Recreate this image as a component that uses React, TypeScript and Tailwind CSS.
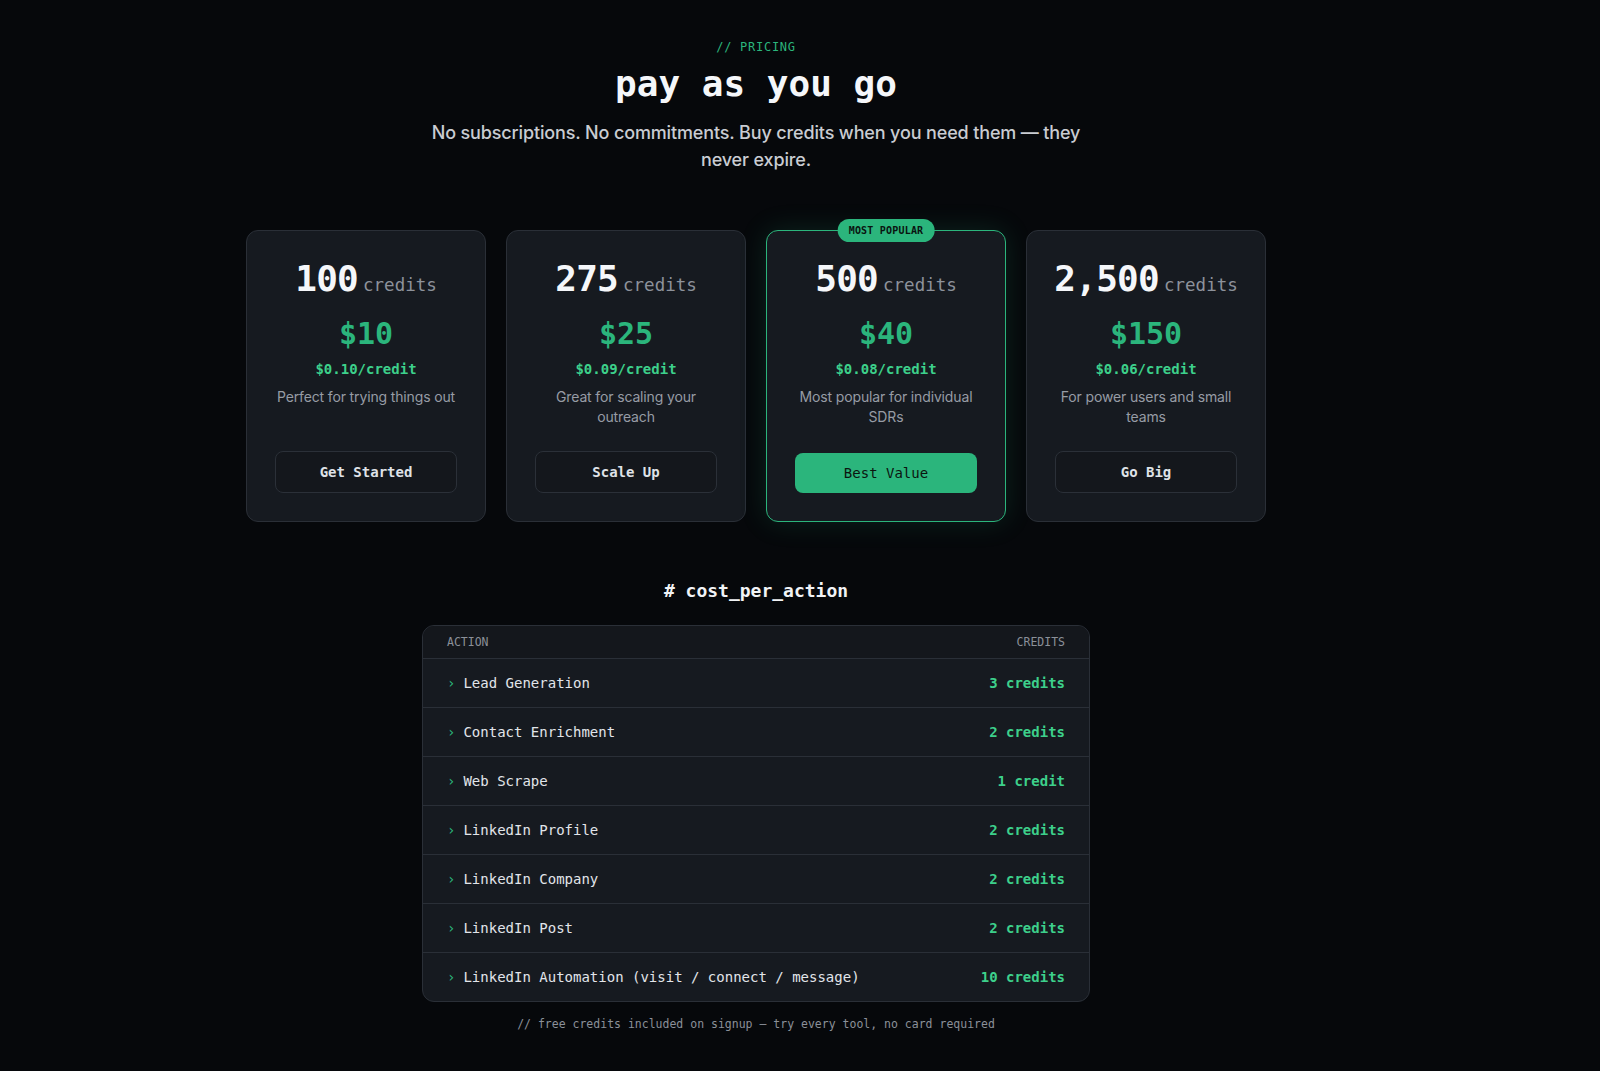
import React from "react";

const mono = { fontFamily: '"DejaVu Sans Mono", "Liberation Mono", monospace' };
const sans = { fontFamily: 'Inter, "Noto Sans", sans-serif' };

type Plan = {
  credits: string;
  price: string;
  per: string;
  desc: string;
  cta: string;
  featured?: boolean;
};

const plans: Plan[] = [
  { credits: "100", price: "$10", per: "$0.10/credit", desc: "Perfect for trying things out", cta: "Get Started" },
  { credits: "275", price: "$25", per: "$0.09/credit", desc: "Great for scaling your outreach", cta: "Scale Up" },
  { credits: "500", price: "$40", per: "$0.08/credit", desc: "Most popular for individual SDRs", cta: "Best Value", featured: true },
  { credits: "2,500", price: "$150", per: "$0.06/credit", desc: "For power users and small teams", cta: "Go Big" },
];

const actions: [string, string][] = [
  ["Lead Generation", "3 credits"],
  ["Contact Enrichment", "2 credits"],
  ["Web Scrape", "1 credit"],
  ["LinkedIn Profile", "2 credits"],
  ["LinkedIn Company", "2 credits"],
  ["LinkedIn Post", "2 credits"],
  ["LinkedIn Automation (visit / connect / message)", "10 credits"],
];

function PlanCard({ plan }: { plan: Plan }) {
  return (
    <div
      className={
        plan.featured
          ? "relative flex flex-col items-center rounded-xl border border-[#2bb57c] bg-[#161a20] px-7 pt-[28px] pb-7 shadow-[0_0_28px_rgba(43,181,124,0.16)]"
          : "relative flex flex-col items-center rounded-xl border border-[#2a2f37] bg-[#161a20] px-7 pt-[28px] pb-7"
      }
    >
      {plan.featured && (
        <div
          className="absolute -top-[12px] left-1/2 -translate-x-1/2 rounded-full bg-[#2bb57c] px-[11px] py-[5px] text-[10px] font-bold leading-[13px] tracking-[0.02em] text-[#0a1410] whitespace-nowrap"
          style={mono}
        >
          MOST POPULAR
        </div>
      )}
      <div className="flex items-baseline gap-[5px]" style={mono}>
        <span className="text-[36px] font-bold leading-[40px] tracking-[-0.02em] text-[#f5f7fa]">{plan.credits}</span>
        <span className="text-[17.5px] leading-[28px] text-[#8d929b]">credits</span>
      </div>
      <div className="mt-[17px] text-[30px] font-bold leading-[36px] text-[#2bb57c]" style={mono}>
        {plan.price}
      </div>
      <div className="mt-[7px] text-[14px] font-bold leading-[20px] text-[#3dd08b]" style={mono}>
        {plan.per}
      </div>
      <p
        className="-mx-2 mt-[8px] text-center text-[14px] leading-[20px] tracking-[-0.01em] text-[#979ca5]"
        style={sans}
      >
        {plan.desc}
      </p>
      <div className="mt-auto w-full pt-6">
        {plan.featured ? (
          <button
            className="flex h-[40px] w-full items-center justify-center rounded-lg bg-[#2bb57c] text-[14px] font-medium text-[#0b1510]"
            style={mono}
          >
            {plan.cta}
          </button>
        ) : (
          <button
            className="flex h-[42px] w-full items-center justify-center rounded-lg border border-[#2b3038] bg-[#14171c] text-[14px] font-bold text-[#dfe2e7]"
            style={mono}
          >
            {plan.cta}
          </button>
        )}
      </div>
    </div>
  );
}

export default function App() {
  return (
    <div className="min-h-[1071px] w-full bg-[#06080b]">
      <div className="flex w-[1512px] flex-col items-center pt-[39px] pb-10">
        <div className="text-[12px] leading-[16px] tracking-[0.06em] text-[#2bb57c]" style={mono}>
          // PRICING
        </div>
        <h1 className="mt-[9px] text-[36px] font-bold leading-[40px] text-[#f5f7fa]" style={mono}>
          pay as you go
        </h1>
        <p
          className="mt-[15px] max-w-[660px] text-center text-[18px] font-medium leading-[27px] tracking-[-0.008em] text-[#c9ccd2]"
          style={sans}
        >
          No subscriptions. No commitments. Buy credits when you need them — they never expire.
        </p>

        <div className="mt-[57px] grid w-[1020px] grid-cols-4 gap-5">
          {plans.map((p) => (
            <PlanCard key={p.credits} plan={p} />
          ))}
        </div>

        <h2 className="mt-[55px] text-[18px] font-bold leading-[28px] text-[#f1f3f6]" style={mono}>
          # cost_per_action
        </h2>

        <div className="mt-[20px] w-[668px] overflow-hidden rounded-xl border border-[#2a2f37] bg-[#161a20]" style={mono}>
          <div className="flex items-center justify-between border-b border-[#2a2f37] bg-[#14171c] px-6 py-2 text-[11.5px] leading-[16px] font-medium text-[#8b9099]">
            <span>ACTION</span>
            <span>CREDITS</span>
          </div>
          {actions.map(([name, cost], i) => (
            <div
              key={name}
              className={
                i < actions.length - 1
                  ? "flex items-center justify-between border-b border-[#2a2f37] px-6 py-[14px] text-[14px] leading-[20px]"
                  : "flex items-center justify-between px-6 py-[14px] text-[14px] leading-[20px]"
              }
            >
              <div className="flex items-center gap-[8px]">
                <span className="text-[#2bb57c]">›</span>
                <span className="font-medium text-[#e2e5ea]">{name}</span>
              </div>
              <span className="font-bold text-[#3dd08b]">{cost}</span>
            </div>
          ))}
        </div>

        <div className="mt-[14px] text-[11.5px] leading-[16px] text-[#8b9099]" style={mono}>
          // free credits included on signup — try every tool, no card required
        </div>
      </div>
    </div>
  );
}
